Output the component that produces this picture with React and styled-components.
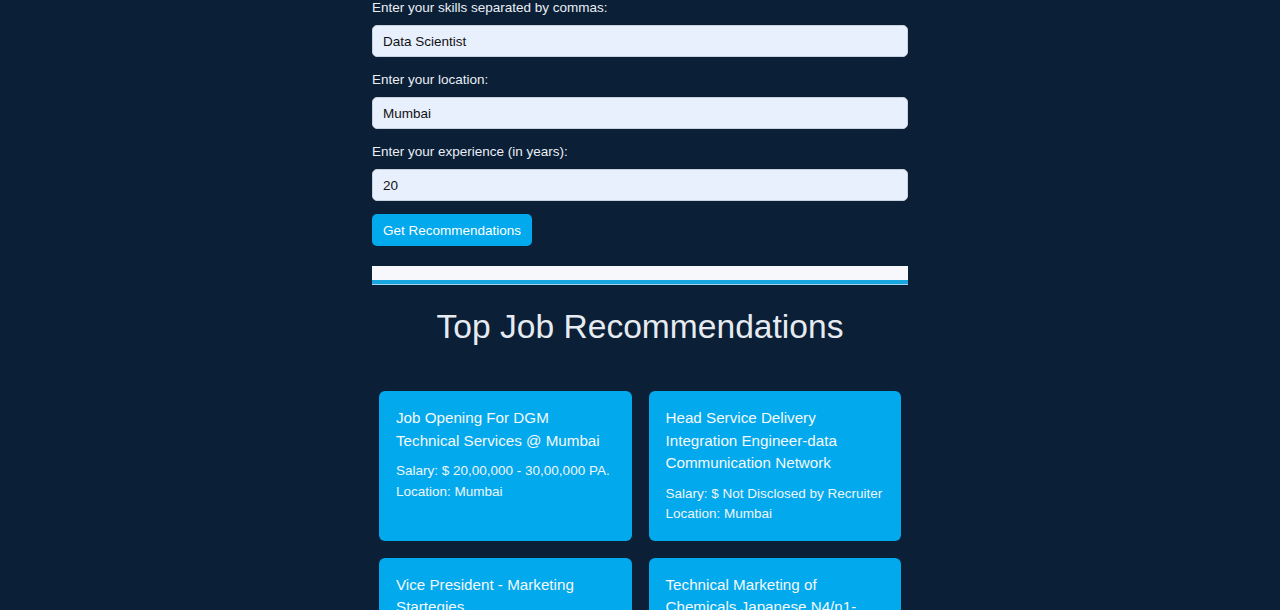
import React from 'react';
import styled, { createGlobalStyle } from 'styled-components';

// =======================
// GLOBAL
// =======================
const GlobalStyle = createGlobalStyle`
    html, body {
        margin: 0;
        padding: 0;
        background-color: #0b1f36;
        font-family: "Liberation Sans", Arial, sans-serif;
        color: #eef2f7;
    }
    * { box-sizing: border-box; }
`;

const Container = styled.div`
    width: 536px;
    margin: 0 auto;
`;

// =======================
// FORM
// =======================
const Form = styled.form`
    display: flex;
    flex-direction: column;
`;

const Label = styled.label`
    font-size: 13.5px;
    line-height: 16px;
    color: #e9eef5;
    margin-bottom: 9px;
`;

const Input = styled.input`
    height: 32px;
    width: 100%;
    padding: 0 10px;
    border: 1px solid #c9d3df;
    border-radius: 5px;
    background-color: #e8f0fe;
    color: #111;
    font-family: inherit;
    font-size: 13.5px;
    margin-bottom: 15px;
    outline: none;
`;

const Button = styled.button`
    align-self: flex-start;
    height: 32px;
    padding: 0 11px;
    border: none;
    border-radius: 5px;
    background-color: #02a9ec;
    color: #fff;
    font-family: inherit;
    font-size: 13.5px;
    margin-top: -2px;
`;

const Divider = styled.div`
    margin-top: 20px;
    height: 18px;
    background-color: #f6f8fb;
    border-bottom: 4px solid #1aa5de;
    box-shadow: 0 1px 0 #9fd6ee;
`;

// =======================
// RESULTS
// =======================
const Title = styled.h2`
    margin: 23px 0 44px;
    text-align: center;
    font-size: 33.6px;
    font-weight: normal;
    line-height: 40px;
    color: #e6ebf2;
`;

const Grid = styled.div`
    display: grid;
    grid-template-columns: 1fr 1fr;
    gap: 17px;
    padding: 0 7px;
`;

const Card = styled.div`
    background-color: #02a9ec;
    border-radius: 6px;
    padding: 16px 17px 16px;
`;

const JobTitle = styled.h3`
    margin: 0 0 9px;
    font-size: 15.2px;
    font-weight: normal;
    line-height: 22.5px;
    color: #f4f8fc;
`;

const Info = styled.p`
    margin: 0;
    font-size: 13.5px;
    line-height: 20.5px;
    color: #eef5fb;
`;

const jobs = [
    { title: 'Job Opening For DGM Technical Services @ Mumbai', salary: '20,00,000 - 30,00,000 PA.', location: 'Mumbai' },
    { title: 'Head Service Delivery Integration Engineer-data Communication Network', salary: 'Not Disclosed by Recruiter', location: 'Mumbai' },
    { title: 'Vice President - Marketing Startegies', salary: 'Not Disclosed by Recruiter', location: 'Mumbai' },
    { title: 'Technical Marketing of Chemicals Japanese N4/n1-', salary: 'Not Disclosed by Recruiter', location: 'Mumbai' },
];

const App = () => {
    return (
        <>
            <GlobalStyle />
            <Container>
                <Form onSubmit={(e) => e.preventDefault()}>
                    <Label>Enter your skills separated by commas:</Label>
                    <Input defaultValue="Data Scientist" />
                    <Label>Enter your location:</Label>
                    <Input defaultValue="Mumbai" />
                    <Label>Enter your experience (in years):</Label>
                    <Input defaultValue="20" />
                    <Button type="submit">Get Recommendations</Button>
                </Form>

                <Divider />

                <Title>Top Job Recommendations</Title>

                <Grid>
                    {jobs.map((job, index) => (
                        <Card key={index}>
                            <JobTitle>{job.title}</JobTitle>
                            <Info>Salary: $ {job.salary}</Info>
                            <Info>Location: {job.location}</Info>
                        </Card>
                    ))}
                </Grid>
            </Container>
        </>
    );
};

export default App;
